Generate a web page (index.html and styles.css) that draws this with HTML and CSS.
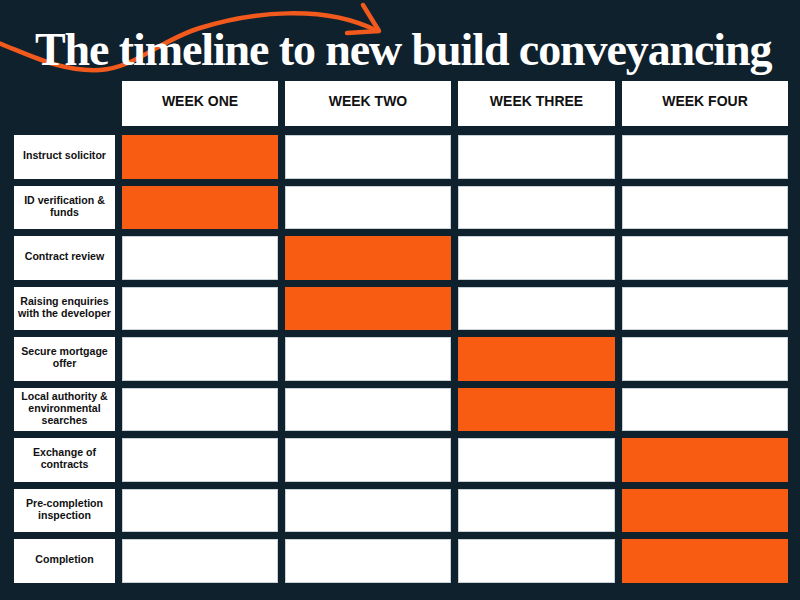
FILE: index.html
```html
<!DOCTYPE html>
<html lang="en">
<head>
<meta charset="utf-8">
<title>The timeline to new build conveyancing</title>
<link rel="stylesheet" href="styles.css">
</head>
<body>
<div class="page">
  <svg class="swoosh" width="400" height="90" viewBox="0 0 400 90" aria-hidden="true">
    <path d="M -4 42 C 30 55, 60 72, 100 70 C 135 68, 160 40, 200 28 C 250 12, 325 4, 377 31" fill="none" stroke="#f15a1c" stroke-width="4.5" stroke-linecap="round"/>
    <path d="M 363 5 L 379 31 L 347 33" fill="none" stroke="#f15a1c" stroke-width="4.5" stroke-linecap="round" stroke-linejoin="round"/>
  </svg>
  <h1 class="title">The timeline to new build conveyancing</h1>

  <div class="head-row">
    <div class="spacer"></div>
    <div class="week">WEEK ONE</div>
    <div class="week">WEEK TWO</div>
    <div class="week">WEEK THREE</div>
    <div class="week">WEEK FOUR</div>
  </div>

  <div class="chart">
    <div class="label">Instruct solicitor</div>
    <div class="cell on"></div><div class="cell"></div><div class="cell"></div><div class="cell"></div>

    <div class="label">ID verification &amp;<br>funds</div>
    <div class="cell on"></div><div class="cell"></div><div class="cell"></div><div class="cell"></div>

    <div class="label">Contract review</div>
    <div class="cell"></div><div class="cell on"></div><div class="cell"></div><div class="cell"></div>

    <div class="label">Raising enquiries<br>with the developer</div>
    <div class="cell"></div><div class="cell on"></div><div class="cell"></div><div class="cell"></div>

    <div class="label">Secure mortgage<br>offer</div>
    <div class="cell"></div><div class="cell"></div><div class="cell on"></div><div class="cell"></div>

    <div class="label">Local authority &amp;<br>environmental<br>searches</div>
    <div class="cell"></div><div class="cell"></div><div class="cell on"></div><div class="cell"></div>

    <div class="label">Exchange of<br>contracts</div>
    <div class="cell"></div><div class="cell"></div><div class="cell"></div><div class="cell on"></div>

    <div class="label">Pre-completion<br>inspection</div>
    <div class="cell"></div><div class="cell"></div><div class="cell"></div><div class="cell on"></div>

    <div class="label">Completion</div>
    <div class="cell"></div><div class="cell"></div><div class="cell"></div><div class="cell on"></div>
  </div>
</div>
</body>
</html>
```

FILE: styles.css
```css
* { box-sizing: border-box; }
html, body {
  margin: 0;
  padding: 0;
  background: #0f212d;
}
.page {
  position: relative;
  width: 800px;
  height: 600px;
  overflow: hidden;
  background: #0f212d;
  padding: 27px 0 0 14px;
  font-family: "Liberation Sans", Arial, sans-serif;
}
.swoosh {
  position: absolute;
  left: 0;
  top: 0;
  z-index: 0;
}
.title {
  position: relative;
  z-index: 1;
  margin: 0 0 8px 21px;
  height: 46px;
  font-family: "Liberation Serif", "Times New Roman", serif;
  font-weight: bold;
  font-size: 46px;
  line-height: 46px;
  letter-spacing: -1.1px;
  color: #ffffff;
  white-space: nowrap;
}
.head-row,
.chart {
  display: grid;
  grid-template-columns: 101px 156px 166px 157px 166px;
  column-gap: 7px;
}
.head-row {
  height: 45px;
  margin-bottom: 9px;
}
.week {
  background: #ffffff;
  display: flex;
  align-items: center;
  justify-content: center;
  padding-bottom: 6px;
  font-weight: bold;
  font-size: 14px;
  color: #111111;
}
.chart {
  grid-template-rows: repeat(9, 43.5px);
  row-gap: 7px;
}
.label {
  background: #ffffff;
  display: flex;
  align-items: center;
  justify-content: center;
  text-align: center;
  font-weight: bold;
  font-size: 10.6px;
  line-height: 12px;
  color: #111111;
  padding: 0 0 3px;
  white-space: nowrap;
}
.cell {
  background: #ffffff;
  box-shadow: inset 0 0 0 1px #c9d0d6;
}
.cell.on {
  background: #f75c12;
  box-shadow: none;
}
```
